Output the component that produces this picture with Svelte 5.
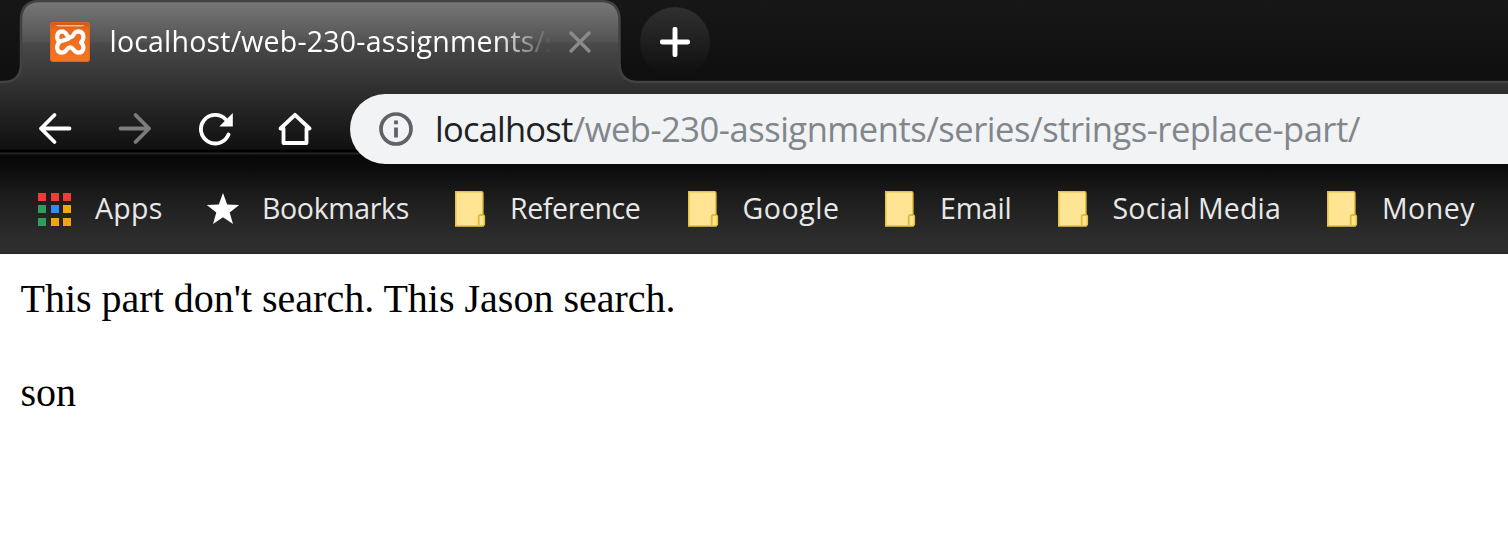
<script>
  const bookmarks = [
    { label: 'Apps', icon: 'apps', item: 168, text: 67.5, gap: 23 },
    { label: 'Bookmarks', icon: 'star', item: 249, text: 147, gap: 22 },
    { label: 'Reference', icon: 'folder', item: 233, text: 130.5, gap: 21 },
    { label: 'Google', icon: 'folder', item: 197, text: 97, gap: 20.5 },
    { label: 'Email', icon: 'folder', item: 173, text: 71.5, gap: 21 },
    { label: 'Social Media', icon: 'folder', item: 269, text: 168.5, gap: 20.5 },
    { label: 'Money', icon: 'folder', item: 180, text: 93, gap: 21 }
  ];
  const grid = ['#f23b37', '#f23b37', '#f23b37', '#2f9e5b', '#2f8cf0', '#f2a50c', '#2f9e5b', '#f2a50c', '#f2a50c'];

  // Tracks the text so that it fills the given width.
  function fit(node, width) {
    const natural = node.getBoundingClientRect().width;
    node.style.letterSpacing = (width - natural) / node.textContent.length + 'px';
  }
</script>

<div class="browser">
  <header class="tabs">
    <svg class="frame" width="1508" height="84" viewBox="0 0 1508 84">
      <defs>
        <linearGradient id="tabfill" x1="0" y1="0" x2="0" y2="84" gradientUnits="userSpaceOnUse">
          <stop offset="0" stop-color="#787878" />
          <stop offset=".25" stop-color="#666" />
          <stop offset=".49" stop-color="#535353" />
          <stop offset=".52" stop-color="#494949" />
          <stop offset="1" stop-color="#323232" />
        </linearGradient>
      </defs>
      <path d="M-3 82H3Q21 82 21 64V20Q21 1 40 1H600Q619.500 1 619.500 20V63Q619.500 82 638 82H1512V90H-3Z" fill="url(#tabfill)" stroke="#424242" stroke-width="2.500" />
    </svg>
    <div class="tab">
      <svg class="favicon" width="40" height="40" viewBox="0 0 40 40">
        <defs>
          <linearGradient id="orange" x1="0" y1="0" x2="0" y2="1">
            <stop offset="0" stop-color="#c85b18" />
            <stop offset=".2" stop-color="#ed6a1c" />
            <stop offset="1" stop-color="#f57520" />
          </linearGradient>
        </defs>
        <rect x=".5" y=".5" width="39" height="39" rx="2" fill="url(#orange)" stroke="#dd671f" />
        <path d="M5 3H35Q33 4.500 30 4.500H10Q7 4.500 5 3Z" fill="#ffb98a" />
        <path d="M9.500 20C6 17 6.200 9.500 12 9.300C17 9.300 16.500 15.500 20 15.500C24 15.500 23 9.300 28.500 9.300C34.500 9.500 34.500 17 31 20.500C34.500 23.500 34.500 30.500 28.500 30.700C23.500 30.700 24 25.300 20 25.300C16.500 25.300 17 30.700 12 30.700C6.200 30.500 6 23.500 9.500 20ZM10 19.500L18 17" fill="none" stroke="#fff" stroke-width="4.200" stroke-linecap="round" stroke-linejoin="round" />
      </svg>
      <div class="title"><span use:fit={449.5}>localhost/web-230-assignments/s</span></div>
      <svg class="close" width="22" height="22" viewBox="0 0 22 22"><path d="M2 2L20 20M20 2L2 20" stroke="#8b8b8b" stroke-width="3.300" stroke-linecap="round" /></svg>
    </div>
    <div class="newtab">
      <svg width="30" height="30" viewBox="0 0 30 30"><path d="M15 2.300V27.700M2.300 15H27.700" stroke="#fff" stroke-width="4.900" stroke-linecap="round" /></svg>
    </div>
  </header>

  <nav class="toolbar">
    <svg width="34" height="34" viewBox="0 0 34 34"><path d="M16.500 3L3 16.500L16.500 30M3 16.500H31.500" fill="none" stroke="#fff" stroke-width="3.800" stroke-linecap="round" stroke-linejoin="round" /></svg>
    <svg width="34" height="34" viewBox="0 0 34 34"><path d="M17.500 3L31 16.500L17.500 30M31 16.500H2.500" fill="none" stroke="#7c7c7c" stroke-width="3.800" stroke-linecap="round" stroke-linejoin="round" /></svg>
    <svg width="36" height="34" viewBox="0 0 36 34"><path d="M30.500 22.500A14.300 14.300 0 1 1 27.500 7.200" fill="none" stroke="#fff" stroke-width="3.800" stroke-linecap="round" /><path d="M34.800 1V14.500H21.300Z" fill="#fff" /></svg>
    <svg width="34" height="34" viewBox="0 0 34 34"><path d="M2.500 16.500L17 2.800L31.500 16.500H28.500V31H5.500V16.500Z" fill="none" stroke="#fff" stroke-width="3.800" stroke-linejoin="round" /></svg>
    <div class="address">
      <svg width="34" height="34" viewBox="0 0 34 34"><circle cx="17" cy="17" r="15" fill="none" stroke="#5f6368" stroke-width="3.700" /><path d="M17 15.500V25.500M17 8.500V12.200" stroke="#5f6368" stroke-width="3.800" /></svg>
      <div class="url"><span class="host" use:fit={137.5}>localhost</span><span class="path" use:fit={787.5}>/web-230-assignments/series/strings-replace-part/</span></div>
    </div>
  </nav>

  <div class="bookmarks">
    {#each bookmarks as b}
      <div class="bookmark" style:width="{b.item}px">
        {#if b.icon === 'apps'}
          <div class="apps">{#each grid as color}<i style:background={color}></i>{/each}</div>
        {:else if b.icon === 'star'}
          <svg width="34" height="36" viewBox="0 0 34 36"><path d="M17 2L21.200 13.500L33.200 14L23.700 21.400L27 33L17 26.300L7 33L10.300 21.400L.8 14L12.800 13.500Z" fill="#fff" /></svg>
        {:else}
          <svg width="34" height="36" viewBox="0 0 34 36">
            <path d="M.8 .8H26.500Q27.800 .8 27.800 2.200V23.500L29.300 25V33.500L28 35H.8Z" fill="#ffe593" stroke="#e8c33f" stroke-width="1.600" />
            <path d="M23.700 34V26Q23.700 24 25.700 24H28" fill="none" stroke="#dfb934" stroke-width="1.800" />
          </svg>
        {/if}
        <span class="label" style:margin-left="{b.gap}px"><span use:fit={b.text}>{b.label}</span></span>
      </div>
    {/each}
  </div>

  <main>
    <p><span use:fit={655}>This part don't search. This Jason search.</span></p>
    <p><span use:fit={55.5}>son</span></p>
  </main>
</div>

<style>
  :global(body) { background: #fff; }
  .browser { width: 1508px; height: 540px; overflow: hidden; font-family: 'Open Sans', 'Noto Sans', sans-serif; }
  svg { display: block; flex: none; }
  span { white-space: pre; }
  .tabs { position: relative; height: 84px; display: flex; background: linear-gradient(#171717, #0e0e0e); }
  .frame { position: absolute; left: 0; top: 0; }
  .tab { position: relative; width: 570px; margin-left: 50px; height: 84px; display: flex; align-items: center; }
  .title { width: 451px; margin-left: 19.500px; height: 44px; line-height: 42px; color: #fff; font-size: 28.500px;
    -webkit-mask-image: linear-gradient(90deg, #000 385px, transparent 441px); mask-image: linear-gradient(90deg, #000 385px, transparent 441px); }
  .close { margin-left: 8.500px; }
  .newtab { position: relative; margin: 7px 0 0 20px; width: 70px; height: 70px; border-radius: 50%; display: grid; place-items: center; background: linear-gradient(#303030, #111 90%); }
  .toolbar { height: 80px; display: flex; padding-left: 38px; background: linear-gradient(#323232 0, #222 30px, #101010 65px, #000 66px, #000 68px, #242424 69px, #202020 70px, #080808 71px, #090909 80px); }
  .toolbar > svg { margin: 28px 46px 0 0; }
  .toolbar > svg:nth-child(3) { margin-right: 44px; }
  .toolbar > .address { margin: 10px 0 0 -8px; flex: 1; height: 70px; border-radius: 35px 0 0 35px; background: #f1f3f4; display: flex; align-items: center; padding-left: 28.500px; box-sizing: border-box; }
  .url { display: flex; margin-left: 22.500px; font-size: 34.500px; line-height: 70px; }
  .host { color: #202124; }
  .path { color: #80868b; }
  .bookmarks { height: 90px; box-sizing: border-box; padding-left: 38px; display: flex; align-items: center; background: linear-gradient(#090909, #1b1b1b 30px, #2b2b2b 70px, #2e2e2e 88px, #222); }
  .bookmark { flex: none; height: 36px; display: flex; align-items: center; color: #e8e8e8; font-size: 28.500px; }
  .label { line-height: 34px; margin-bottom: 2px; }
  .apps { width: 34px; height: 34px; display: grid; grid-template-columns: repeat(3, 8px); grid-template-rows: repeat(3, 8px); gap: 4.500px; align-content: center; }
  main { padding: 22px 0 0 20.500px; font-family: 'Liberation Serif', serif; font-size: 40px; color: #000; }
  p { margin: 0 0 48px; line-height: 46px; }
</style>
